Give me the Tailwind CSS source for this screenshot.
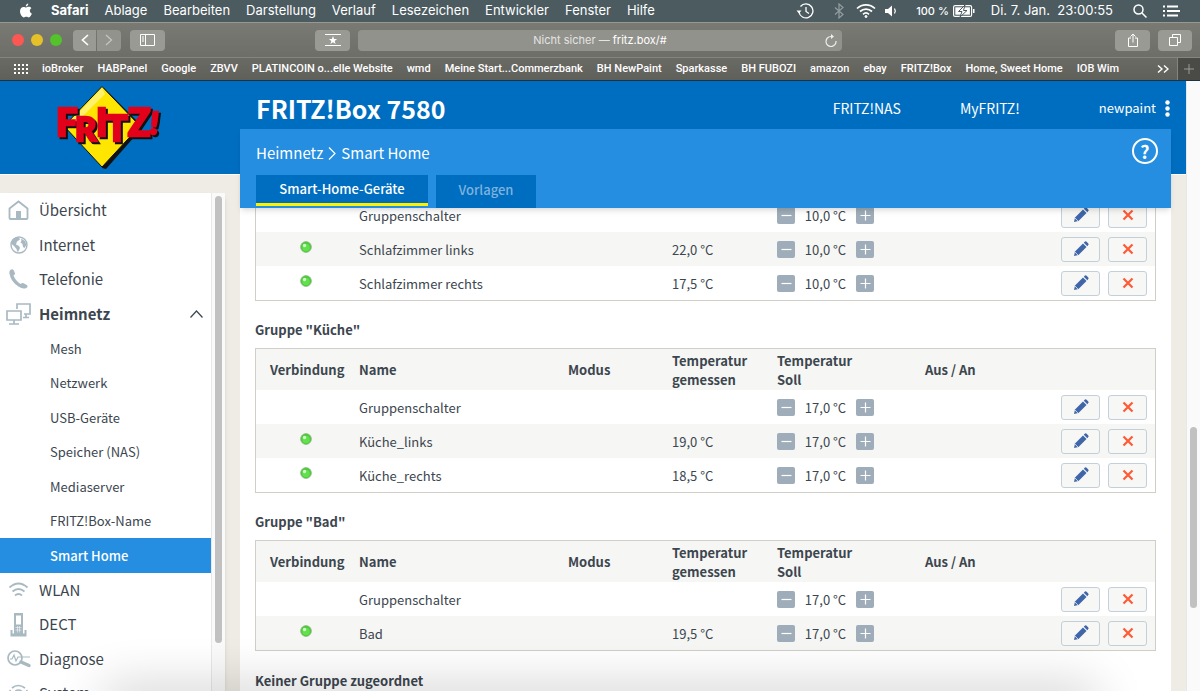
<!DOCTYPE html>
<html lang="de">
<head>
  <meta charset="UTF-8"/>
  <meta name="viewport" content="width=device-width,initial-scale=1"/>
  <title>FRITZ!Box 7580</title>
  <script src="https://cdn.jsdelivr.net/npm/@tailwindcss/browser@4"></script>
</head>
<body class="relative h-screen overflow-hidden flex flex-col bg-[#efece5] text-[#3c464f] font-['Noto_Sans_CJK_SC',sans-serif]">

  <!-- Icons -->
  <svg class="hidden">
    <symbol id="pencil" viewBox="0 0 16 16">
      <path d="M1 15l1-4.500L10 2.500l3.500 3.500L5.500 14z" fill="#3e66a8"/>
      <path d="M10.800 1.700L12 .600q.800-.600 1.600.100l1.700 1.700q.700.800 0 1.600L14.300 5.200z" fill="#3e66a8"/>
      <path d="M1.700 10.800l3.500 3.500" stroke="#f7f7f5" stroke-width=".8"/>
    </symbol>
    <symbol id="cross" viewBox="0 0 12 12">
      <path d="M1.500 1.500l9 9M10.500 1.500l-9 9" stroke="#ff5a36" stroke-width="2.200"/>
    </symbol>
    <symbol id="led" viewBox="0 0 12 12">
      <circle cx="6" cy="6" r="5.400" fill="#4fc63a"/>
      <circle cx="6" cy="6" r="5.400" fill="none" stroke="#8dbb80" stroke-width=".8"/>
      <circle cx="6" cy="6.500" r="3.800" fill="#5fe24b"/>
      <circle cx="4.500" cy="4.500" r="1.700" fill="#d5fbd0"/>
    </symbol>
  </svg>

  <!-- macOS menu bar -->
  <header class="h-[22px] shrink-0 flex items-center justify-between bg-[#4b5b60] text-white text-[13px] font-['Inter',sans-serif] px-5">
    <nav class="flex items-center gap-4 whitespace-nowrap">
      <svg class="w-3 h-4 mr-[3px]" viewBox="0 0 12 15" fill="#fff"><path d="M8.300 0c.1 1.500-1 3-2.500 3.100C5.600 1.600 6.900.200 8.300 0zM6.200 4c.6 0 1.400-.7 2.600-.7 1 0 2 .5 2.600 1.400-2.300 1.400-1.900 4.400.5 5.400-.6 1.700-1.800 3.800-3.100 3.800-1 0-1.300-.6-2.500-.6s-1.600.6-2.500.6C2.200 13.900 0 10.800 0 7.800c0-2.900 1.800-4.400 3.500-4.400 1.200 0 2 .6 2.700.6z"/></svg>
      <span class="font-bold">Safari</span>
      <span>Ablage</span>
      <span>Bearbeiten</span>
      <span>Darstellung</span>
      <span>Verlauf</span>
      <span>Lesezeichen</span>
      <span>Entwickler</span>
      <span>Fenster</span>
      <span>Hilfe</span>
    </nav>
    <div class="flex items-center gap-4 whitespace-nowrap">
      <svg class="w-[18px] h-4" viewBox="0 0 18 16" fill="none" stroke="#fff" stroke-width="1.300"><path d="M3 9a7 7 0 1 0 1.500-5.500M10 4v4.500l3 2"/><path d="M.5 7.500h5L3 10.500z" fill="#fff" stroke="none"/></svg>
      <svg class="w-[18px] h-4 -mr-2 opacity-40" viewBox="0 0 18 16" fill="none" stroke="#fff" stroke-width="1.200"><path d="M5 4.500l8 7L9 15V1l4 3.500-8 7"/></svg>
      <svg class="w-5 h-4 -mr-2" viewBox="0 0 20 16" fill="none" stroke="#fff" stroke-width="1.700"><path d="M1 5.500a13 13 0 0 1 18 0M4 8.500a9 9 0 0 1 12 0M7 11.300a4.500 4.500 0 0 1 6 0"/><circle cx="10" cy="13.500" r="1" fill="#fff" stroke-width="1"/></svg>
      <svg class="w-4 h-4" viewBox="0 0 16 16" fill="#fff"><path d="M1 6h3l4-3.500v11L4 10H1z"/><path d="M10.500 5.500q1.600 2.500 0 5" fill="none" stroke="#fff" stroke-width="1.300"/></svg>
      <span class="text-[11px] font-medium">100 %</span>
      <svg class="w-[22px] h-3 -ml-3" viewBox="0 0 22 12"><rect x=".6" y=".6" width="18" height="10.800" rx="1.500" fill="none" stroke="#fff" stroke-width="1.200"/><rect x="2.300" y="2.300" width="14.600" height="7.400" fill="#fff"/><path d="M20 4h1.500v4H20z" fill="#fff"/><path d="M12 0L5.500 6.500H9L7 12l7-6.500h-3.500z" fill="#fff" stroke="#4b5b60"/></svg>
      <span>Di. 7. Jan.&nbsp; 23:00:55</span>
      <svg class="w-[14px] h-[14px] ml-1" viewBox="0 0 14 14" fill="none" stroke="#fff" stroke-width="1.500"><circle cx="5.500" cy="5.500" r="4.500"/><path d="M9 9l4.500 4.500"/></svg>
      <svg class="w-[17px] h-3" viewBox="0 0 17 12" stroke="#fff" stroke-width="1.800"><path d="M0 1.500h2M4 1.500h11M0 6h2M4 6h13M0 10.500h2M4 10.500h11"/></svg>
    </div>
  </header>

  <!-- Safari toolbar -->
  <div class="h-[35px] shrink-0 flex items-center bg-linear-to-b from-[#7a7a74] to-[#6e6e69] border-t border-[#99988f] pl-3 pr-2 text-white font-['Inter',sans-serif]">
    <div class="flex gap-[7px]">
      <span class="size-3 rounded-full bg-[#fc5753]"></span>
      <span class="size-3 rounded-full bg-[#e6c029]"></span>
      <span class="size-3 rounded-full bg-[#53c22b]"></span>
    </div>
    <button class="ml-[11px] w-[23px] h-[21px] rounded-l bg-[#9a9a95] flex items-center justify-center" aria-label="Zurück">
      <svg class="w-2 h-3" viewBox="0 0 8 12" fill="none" stroke="#fff" stroke-width="1.600"><path d="M7 1L1.500 6 7 11"/></svg>
    </button>
    <button class="ml-px w-[24px] h-[21px] rounded-r bg-[#93938e] flex items-center justify-center" aria-label="Vorwärts">
      <svg class="w-2 h-3" viewBox="0 0 8 12" fill="none" stroke="#c4c4c0" stroke-width="1.300"><path d="M1 1l5.500 5L1 11"/></svg>
    </button>
    <button class="ml-[9px] w-[35px] h-[21px] rounded bg-[#9a9a95] flex items-center justify-center" aria-label="Seitenleiste">
      <svg class="w-[15px] h-3" viewBox="0 0 15 12" fill="none" stroke="#fff"><path d="M.5.500h14v11H.500zM5.500.500v11M2 3h2M2 5h2M2 7h2"/></svg>
    </button>
    <button class="ml-[150px] w-[35px] h-[21px] rounded bg-[#9a9a95] flex items-center justify-center" aria-label="Favoriten">
      <svg class="w-4 h-3" viewBox="0 0 16 12"><path d="M0 .500h16M0 11.500h16" stroke="#fff"/><path d="M8 2l1.100 2.900 3 .1-2.400 1.900.9 3L8 8.200 5.400 9.900l.9-3L3.900 5l3-.1z" fill="#fff"/></svg>
    </button>
    <div class="ml-2 flex-1 h-[21px] rounded bg-[#92928d] flex items-center pl-[17px] pr-[5px] text-[11px]">
      <p class="flex-1 text-center"><span class="text-[#e4e4e1]">Nicht sicher —</span> fritz.box/#</p>
      <button aria-label="Neu laden">
        <svg class="w-3 h-[13px] block" viewBox="0 0 12 13" fill="none" stroke="#eee" stroke-width="1.200"><path d="M11 7a5 5 0 1 1-5-4.500h1.500"/><path d="M6 0l3 2.500L6 5z" fill="#eee" stroke="none"/></svg>
      </button>
    </div>
    <button class="ml-[273px] w-[35px] h-[21px] rounded bg-[#9a9a95] flex items-center justify-center" aria-label="Teilen">
      <svg class="w-3 h-[14px]" viewBox="0 0 12 14" fill="none" stroke="#fff"><path d="M4 5H1.500v8.500h9V5H8M6 9.500V1M3.500 3.500L6 1l2.500 2.500"/></svg>
    </button>
    <button class="ml-2 w-[34px] h-[21px] rounded bg-[#9a9a95] flex items-center justify-center" aria-label="Tabs">
      <svg class="w-3 h-3" viewBox="0 0 12 12" fill="none" stroke="#fff"><path d="M.5 3.500h8v8h-8zM3.500 3.500v-3h8v8h-3"/></svg>
    </button>
  </div>

  <!-- Bookmarks bar -->
  <div class="h-6 shrink-0 flex items-center bg-linear-to-b from-[#6b6b66] to-[#60605b] border-t border-[#85857f] border-b border-b-[#1d3345] pl-[14px] text-white text-[11px] font-medium font-['Roboto',sans-serif] whitespace-nowrap">
    <svg class="w-[14px] h-[10px] mr-[14px] shrink-0" viewBox="0 0 14 10" stroke="#fff" stroke-width="2" stroke-dasharray="2 2"><path d="M0 1h14M0 5h14M0 9h14"/></svg>
    <nav class="flex gap-[14px]">
      <a href="#">ioBroker</a>
      <a href="#">HABPanel</a>
      <a href="#">Google</a>
      <a href="#">ZBVV</a>
      <a href="#">PLATINCOIN o...elle Website</a>
      <a href="#">wmd</a>
      <a href="#">Meine Start...Commerzbank</a>
      <a href="#">BH NewPaint</a>
      <a href="#">Sparkasse</a>
      <a href="#">BH FUBOZI</a>
      <a href="#">amazon</a>
      <a href="#">ebay</a>
      <a href="#">FRITZ!Box</a>
      <a href="#">Home, Sweet Home</a>
      <a href="#">IOB Wim</a>
    </nav>
    <svg class="w-3 h-2 ml-auto mr-2 shrink-0" viewBox="0 0 12 8" fill="none" stroke="#fff" stroke-width="1.400"><path d="M1 .500L5 4 1 7.500M7 .500L11 4 7 7.500"/></svg>
    <button class="w-[23px] h-full shrink-0 bg-[#4a4a46] border-l border-[#85857f] flex items-center justify-center" aria-label="Neuer Tab">
      <svg class="size-[10px]" viewBox="0 0 10 10" stroke="#9b9b96"><path d="M5 0v10M0 5h10"/></svg>
    </button>
  </div>

  <!-- FRITZ!Box page -->
  <div class="relative flex-1 min-h-0 flex">
    <div class="absolute inset-x-0 top-0 h-[94px] bg-[#006ec0] border-b border-white mr-[14px]"></div>

    <!-- Sidebar -->
    <aside class="relative w-[225px] mr-[15px] shrink-0 flex flex-col">
      <div class="h-[112px] shrink-0 pl-[55px] pt-1">
        <svg class="w-[108px] h-[86px]" viewBox="0 0 108 86" role="img" aria-label="FRITZ!">
          <path d="M49 3L88 42 51 84l-4-1z" fill="#111"/>
          <path d="M47 1.500L85 41 47 82 9 41z" fill="#ffe600" stroke="#111"/>
          <path d="M47 3L12 40l4 3L50 9z" fill="#fff9b0" opacity=".6"/>
          <g class="drop-shadow-[2px_2px_0_#111]" font-family="Lato, sans-serif" font-weight="900" fill="#e2001a" stroke="#e2001a" stroke-width="2.500">
            <text x="1" y="51" font-size="38">F</text>
            <text x="20" y="56" font-size="33">R</text>
            <text x="41" y="51" font-size="38">I</text>
            <text x="51" y="56" font-size="36">T</text>
            <text x="73" y="51" font-size="37">Z</text>
            <text x="95" y="49" font-size="31" font-style="italic">!</text>
          </g>
        </svg>
      </div>
      <div class="flex-1 min-h-0 flex bg-white shadow-md">
        <nav class="flex-1 overflow-hidden">
          <ul class="grid auto-rows-fr h-[518px] text-[15px] [&_a]:h-full [&_a]:flex [&_a]:items-center [&_svg]:shrink-0">
            <li><a href="#" class="pl-2 gap-[10px]">
              <svg class="w-[21px] h-5" viewBox="0 0 21 20" fill="none" stroke="#a9b9c2" stroke-width="1.800"><path d="M1.500 8.500L10.500 1.500l9 7V18q0 1-1 1h-16q-1 0-1-1z"/><path d="M8 11h5v7H8z" fill="#a9b9c2" stroke="none"/></svg>
              Übersicht</a></li>
            <li><a href="#" class="pl-2 gap-[10px]">
              <svg class="w-[21px] h-5" viewBox="0 0 21 20"><circle cx="11" cy="10" r="8" fill="none" stroke="#a9b9c2" stroke-width="1.400"/><path d="M4 5q4-3.500 7-2.500l1 2-3 2-1 3 3 1.500 1 2-2 4q-1 0-1.500-3L6 11 3.500 9zM13 3.500l4 2.500 1.500 4-2 3-1.500-1-.5-3-2-1.500 1-2z" fill="#a9b9c2"/></svg>
              Internet</a></li>
            <li><a href="#" class="pl-2 gap-[10px]">
              <svg class="w-[21px] h-5" viewBox="0 0 21 20"><path d="M2.500.800q2-1.500 3.300.700l1.200 2.700q.3 1.300-1.500 2.300 1.800 5 7 8.500 1.800-1.700 3-.8l3.300 1.900q1.800 1.700-.5 2.800-3.300 1.700-7.500-1.100Q3 13 1.400 4.500 1.200 2 2.500.800z" fill="#a9b9c2"/></svg>
              Telefonie</a></li>
            <li><a href="#" class="pl-[6px] pr-2 gap-[7px] font-bold">
              <svg class="w-[26px] h-[22px]" viewBox="0 0 26 22" fill="none" stroke="#a9b9c2" stroke-width="1.700"><path d="M11 6V1h13v10h-6M1 8h14v9H1zM8 17v3.500M3 21h10M20 11v3M17 14.500h6"/></svg>
              Heimnetz
              <svg class="w-[13px] h-2 ml-auto" viewBox="0 0 13 8" fill="none" stroke="#3c464f" stroke-width="1.200"><path d="M.5 7.500l6-6.500 6 6.500"/></svg></a></li>
            <li class="text-[13px]"><a href="#" class="pl-[50px]">Mesh</a></li>
            <li class="text-[13px]"><a href="#" class="pl-[50px]">Netzwerk</a></li>
            <li class="text-[13px]"><a href="#" class="pl-[50px]">USB-Geräte</a></li>
            <li class="text-[13px]"><a href="#" class="pl-[50px]">Speicher (NAS)</a></li>
            <li class="text-[13px]"><a href="#" class="pl-[50px]">Mediaserver</a></li>
            <li class="text-[13px]"><a href="#" class="pl-[50px]">FRITZ!Box-Name</a></li>
            <li class="text-[13px]"><a href="#" class="pl-[50px] bg-[#258ee0] text-white font-medium">Smart Home</a></li>
            <li><a href="#" class="pl-2 gap-[10px]">
              <svg class="w-[21px] h-5" viewBox="0 0 21 20" fill="none" stroke="#a9b9c2" stroke-width="1.700"><path d="M1.500 7.500q9-8 18 0M4.500 11.500q6-5 12 0M7 15.500q3.500-3 7 0"/></svg>
              WLAN</a></li>
            <li><a href="#" class="pl-2 gap-[10px]">
              <svg class="w-[21px] h-6" viewBox="0 0 21 24" fill="#a9b9c2"><path d="M6 0h9v21H6zM8 2.500v9h5v-9z" fill-rule="evenodd"/><path d="M2.500 17h2v3.500h12V17h2v6.500h-16z"/><path d="M7.500 14.500h6M7.500 17h6M9.500 13v6.500M11.500 13v6.500" stroke="#fff" stroke-width=".5"/></svg>
              DECT</a></li>
            <li><a href="#" class="pl-[7px] gap-[7px]">
              <svg class="w-[25px] h-5" viewBox="0 0 25 20" fill="none" stroke="#a9b9c2"><circle cx="8" cy="9" r="7" stroke-width="1.700"/><path d="M3 10h2l2-4 2 6 2-4h12" stroke-width="1.200"/><path d="M14 13l8 3.500" stroke-width="3.500" stroke-linecap="round"/></svg>
              Diagnose</a></li>
            <li><a href="#" class="pl-2 gap-[10px]">
              <svg class="w-[21px] h-5" viewBox="0 0 21 20" fill="none" stroke="#a9b9c2" stroke-width="1.700"><path d="M4 4q6-5 13 0M1.500 10q0-2 1-4M19.500 10q0-2-1-4"/><circle cx="10.500" cy="10" r="4"/></svg>
              System</a></li>
          </ul>
        </nav>
        <div class="w-[14px] bg-[#fafafa] border-l border-[#e8e8e8] pt-[3px] pl-[3px]">
          <div class="w-[7px] h-[447px] rounded-full bg-[#c1c1c1]"></div>
        </div>
      </div>
    </aside>

    <!-- Content -->
    <div class="relative flex-1 min-w-0 mr-[15px] flex flex-col">
      <header class="h-12 shrink-0 flex items-center text-white pl-4 pt-[6px] text-[14px]">
        <h1 class="mr-auto text-[25px] leading-8 font-bold">FRITZ!Box 7580</h1>
        <a href="#" class="mr-[59px]">FRITZ!NAS</a>
        <a href="#" class="mr-[79px]">MyFRITZ!</a>
        <button class="flex items-center gap-[9px] mr-px text-[13px]">newpaint
          <svg class="w-[5px] h-[17px]" viewBox="0 0 5 17" fill="#fff"><circle cx="2.500" cy="2.500" r="2.200"/><circle cx="2.500" cy="8.500" r="2.200"/><circle cx="2.500" cy="14.500" r="2.200"/></svg>
        </button>
      </header>
      <div class="relative h-[79px] shrink-0 bg-[#258ee0] shadow-md text-white pl-4 pr-[13px] flex flex-col justify-between">
        <div class="flex items-start justify-between pt-[9px]">
          <p class="flex items-center gap-[5px] pt-[3px] text-[15px] leading-6">Heimnetz
            <svg class="w-2 h-[13px]" viewBox="0 0 8 13" fill="none" stroke="#fff" stroke-width="1.200"><path d="M1 .500l6 6-6 6"/></svg>
            Smart Home</p>
          <button class="size-[26px] rounded-full border-2 border-white text-[18px] leading-none font-bold flex items-center justify-center" aria-label="Hilfe">?</button>
        </div>
        <div class="flex items-start gap-2 text-[13px] font-medium">
          <a href="#" class="w-[172px] h-[31px] bg-[#006ec0] border-b-3 border-[#fff200] flex items-center justify-center">Smart-Home-Geräte</a>
          <a href="#" class="w-[100px] h-[33px] pb-1 bg-[#006ec0] text-[#7fb2de] flex items-center justify-center">Vorlagen</a>
        </div>
      </div>

      <main class="flex-1 min-h-0 overflow-hidden bg-white px-[15px] text-[13px]">
        <div id="groups" class="-mt-[11px]"></div>
        <h2 class="mt-[18px] leading-6 font-bold">Keiner Gruppe zugeordnet</h2>
      </main>
    </div>

    <!-- Page scrollbar -->
    <div class="relative w-[14px] bg-[#fafafa] border-l border-[#e8e8e8]">
      <div class="absolute top-[346px] right-[3px] w-[7px] h-[181px] rounded-full bg-[#c1c1c1]"></div>
    </div>
  </div>

  <!-- Dock shadow -->
  <div class="absolute -bottom-5 left-[110px] right-[110px] h-4 shadow-[0_0_50px_6px_rgb(0_0_0/0.24)] pointer-events-none"></div>

  <script>
  // the first group is scrolled past its title and column heads
  const groups = [
    { target: '10,0 °C', devices: [['Schlafzimmer links', '22,0 °C'], ['Schlafzimmer rechts', '17,5 °C']] },
    { name: 'Küche', target: '17,0 °C', devices: [['Küche_links', '19,0 °C'], ['Küche_rechts', '18,5 °C']] },
    { name: 'Bad', target: '17,0 °C', devices: [['Bad', '19,5 °C']] }
  ];

  const stepButton = (label, path) => `
    <button class="w-[18px] h-[17px] rounded-xs bg-[#9eadb9] flex items-center justify-center" aria-label="${label}">
      <svg class="size-[11px]" viewBox="0 0 11 11" stroke="#fff" stroke-width="1.200"><path d="${path}"/></svg>
    </button>`;

  const actionButton = (label, icon, size) => `
    <button class="w-[39px] h-[25px] rounded-[3px] border border-[#c3d0d9] bg-[#f7f7f5] flex items-center justify-center" aria-label="${label}">
      <svg class="${size}"><use href="#${icon}"/></svg>
    </button>`;

  const row = (name, measured, target, online) => `
    <tr class="h-[34px] even:bg-[#f6f6f4]">
      <td class="pr-1 pb-1">${online ? '<svg class="size-3 mx-auto"><use href="#led"/></svg>' : ''}</td>
      <td>${name}</td>
      <td></td>
      <td>${measured}</td>
      <td><div class="flex items-center">${stepButton('Kälter', 'M.5 5.5h10')}
        <span class="w-[61px] text-center">${target}</span>${stepButton('Wärmer', 'M5.5.5v10M.5 5.5h10')}</div></td>
      <td></td>
      <td><div class="flex gap-2">${actionButton('Bearbeiten', 'pencil', 'size-4')}${actionButton('Löschen', 'cross', 'size-3')}</div></td>
    </tr>`;

  const head = `
    <thead class="text-left bg-[#f6f6f4]">
      <tr class="h-[41px]">
        <th class="pl-[14px]">Verbindung</th><th>Name</th><th>Modus</th><th>Temperatur<br>gemessen</th>
        <th>Temperatur<br>Soll</th><th>Aus / An</th><th></th>
      </tr>
    </thead>`;

  document.getElementById('groups').innerHTML = groups.map(g => `
    ${g.name ? `<h2 class="h-[47px] pt-[17px] leading-6 font-bold">Gruppe "${g.name}"</h2>` : ''}
    <table class="w-full table-fixed border-separate border-spacing-0 border border-[#cfcfc8] leading-[19px]">
      <colgroup>
        <col class="w-[103px]"><col><col class="w-[104px]"><col class="w-[105px]">
        <col class="w-[148px]"><col class="w-[136px]"><col class="w-[94px]">
      </colgroup>
      ${g.name ? head : ''}
      <tbody>
        ${row('Gruppenschalter', '', g.target, false)}
        ${g.devices.map(d => row(d[0], d[1], g.target, true)).join('')}
      </tbody>
    </table>`).join('');
  </script>
</body>
</html>
